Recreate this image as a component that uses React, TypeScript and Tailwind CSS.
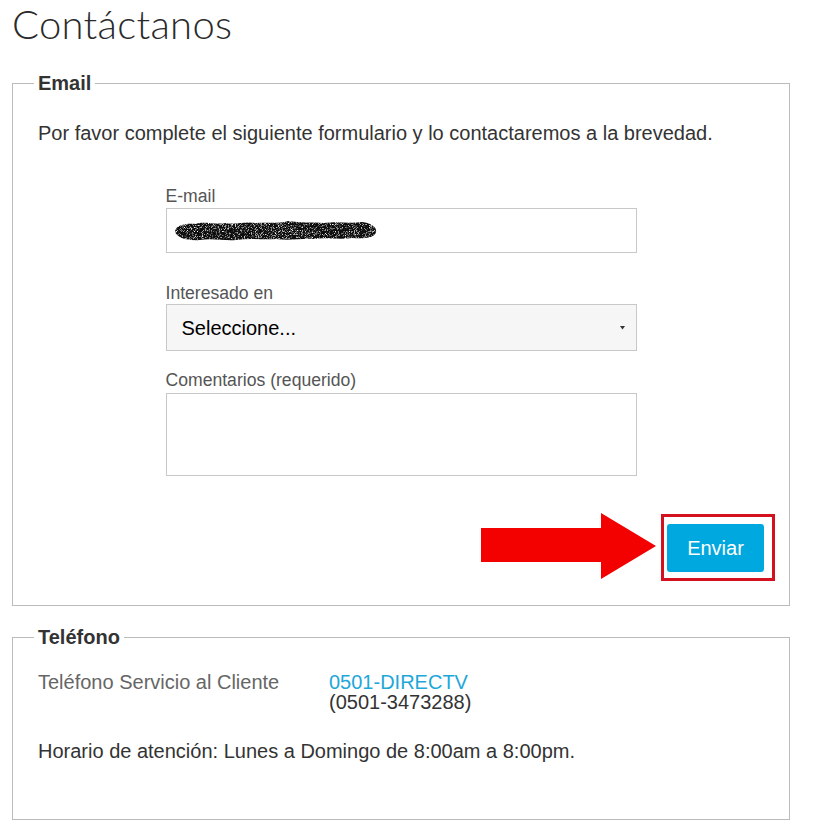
import React from 'react';

const sans = { fontFamily: '"Liberation Sans", Arial, sans-serif' };

function Redacted() {
  return (
    <svg width="204" height="22" viewBox="0 0 204 22" className="block">
      <defs>
        <filter id="grain" x="0" y="0" width="100%" height="100%">
          <feTurbulence type="fractalNoise" baseFrequency="1.3" numOctaves="2" seed="7" result="noise" />
          <feColorMatrix in="noise" type="matrix" values="0 0 0 0 0  0 0 0 0 0  0 0 0 0 0  0 0 0 -3.2 2.6" result="mask" />
          <feComposite in="SourceGraphic" in2="mask" operator="in" />
        </filter>
      </defs>
      <path
        d="M1 11 C2 5 12 3 22 4 C30 1 40 5 52 3 C62 5 70 1 82 3 C94 2 104 4 114 1 C126 3 138 2 150 3 C162 1 176 4 188 2 C198 3 203 8 202 12 C201 18 190 19 178 18 C166 20 152 17 140 19 C128 18 116 21 102 19 C90 20 76 18 62 20 C50 21 38 18 26 20 C14 21 2 18 1 11 Z"
        fill="#111"
        filter="url(#grain)"
      />
    </svg>
  );
}

export default function App() {
  return (
    <div className="bg-white min-h-screen px-3 text-[#333]" style={sans}>
      <h1 className="mb-[23px] text-[40px] leading-[48px] font-light text-[#2a2a2a] tracking-[0.3px]" style={{ fontFamily: 'Lato, "Open Sans", sans-serif' }}>
        Contáctanos
      </h1>

      <fieldset className="border border-[#bbb] pl-[25px] pr-[25px] pt-[26px] pb-[33px] w-[778px]">
        <legend className="-ml-1 px-1 text-[20px] leading-[24px] font-bold text-[#333]">Email</legend>
        <p className="text-[20px] leading-[24px] text-[#333]">
          Por favor complete el siguiente formulario y lo contactaremos a la brevedad.
        </p>

        <div className="w-[471px] mx-auto mt-[41px]">
          <label className="block text-[17.6px] leading-[20px] text-[#555] mb-[2px]">E-mail</label>
          <div className="h-[45px] border border-[#c8c8c8] bg-white flex items-center pl-[7px]">
            <Redacted />
          </div>

          <label className="block mt-[30px] text-[17.6px] leading-[20px] text-[#555] mb-[1px]">Interesado en</label>
          <div className="h-[47px] border border-[#c8c8c8] bg-[#f6f6f6] flex items-center pl-[15px] pr-[10px] justify-between">
            <span className="text-[20px] text-black">Seleccione...</span>
            <svg width="5" height="4" viewBox="0 0 5 4" className="mr-[1px]">
              <path d="M0 0 L5 0 L2.5 3.5 Z" fill="#333" />
            </svg>
          </div>

          <label className="block mt-[19px] text-[17.6px] leading-[20px] text-[#555] mb-[3px]">Comentarios (requerido)</label>
          <textarea className="block w-full h-[83px] border border-[#c8c8c8] bg-white resize-none outline-none" />
        </div>

        <div className="flex justify-end mt-[48px]">
          <div className="relative">
            <button className="w-[97px] h-[48px] rounded-[3px] bg-[#00a8e0] text-white text-[20px]">Enviar</button>
            <div className="absolute -left-[6px] -top-[10px] -right-[11px] -bottom-[9px] border-[3px] border-[#d4121f] pointer-events-none" />
            <svg className="absolute right-[107px] -top-[12px]" width="176" height="68" viewBox="0 0 176 68">
              <path d="M0 16 L120 16 L120 1 L175 34 L120 67 L120 50 L0 50 Z" fill="#f30000" />
            </svg>
          </div>
        </div>
      </fieldset>

      <fieldset className="mt-[19px] border border-[#bbb] pl-[25px] pr-[25px] pt-[23px] pb-[58px] w-[778px]">
        <legend className="-ml-1 px-1 text-[20px] leading-[24px] font-bold text-[#333]">Teléfono</legend>
        <div className="grid grid-cols-[291px_1fr] text-[20px] leading-[20px]">
          <span className="text-[#666]">Teléfono Servicio al Cliente</span>
          <div>
            <div className="text-[#1ea7d9]">0501-DIRECTV</div>
            <div className="text-[#333]">(0501-3473288)</div>
          </div>
        </div>
        <p className="mt-[29px] text-[20px] leading-[20px] text-[#333]">
          Horario de atención: Lunes a Domingo de 8:00am a 8:00pm.
        </p>
      </fieldset>
    </div>
  );
}
